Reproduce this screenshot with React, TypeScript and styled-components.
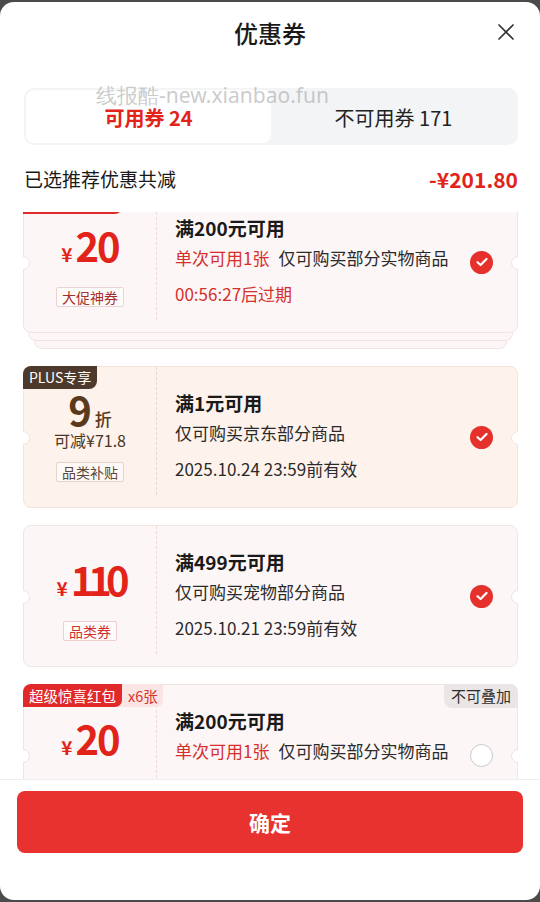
import styled, { createGlobalStyle, css } from 'styled-components';

const GlobalStyle = createGlobalStyle`
  body {
    margin: 0;
    background: #4b4b4b;
    font-family: "Noto Sans CJK SC", "Noto Sans", sans-serif;
    color: #1f1f1f;
  }
`;

const Sheet = styled.div`
  margin-top: 2px;
  height: 898px;
  background: #fff;
  border-radius: 14px;
  display: flex;
  flex-direction: column;
  overflow: hidden;
`;

const Header = styled.div`
  height: 60px;
  display: grid;
  grid-template-columns: 1fr auto 1fr;
  align-items: center;
`;

const Title = styled.div`
  grid-column: 2;
  font-size: 24px;
  font-weight: 500;
  color: #1a1a1a;
`;

const Close = styled.div`
  justify-self: end;
  margin-right: 26px;
  display: flex;
`;

const Tabs = styled.div`
  position: relative;
  margin: 26px 22px 0 24px;
  height: 57px;
  box-sizing: border-box;
  padding: 2px;
  background: #f3f4f6;
  border-radius: 10px;
  display: grid;
  grid-template-columns: 1fr 1fr;
`;

const Tab = styled.div<{ $active?: boolean }>`
  display: flex;
  align-items: center;
  justify-content: center;
  font-size: 20px;
  border-radius: 8px;
  padding-top: 2px;
  ${(p) =>
    p.$active
      ? css`
          background: #fff;
          color: #e2231a;
          font-weight: 700;
        `
      : css`
          color: #222;
        `}
`;

const Watermark = styled.div`
  position: absolute;
  left: 72px;
  top: -7px;
  font-size: 21px;
  color: rgba(160, 160, 160, 0.55);
  font-family: "Noto Sans", sans-serif;
  pointer-events: none;
`;

const Summary = styled.div`
  height: 67px;
  padding: 0 22px 0 24px;
  display: flex;
  align-items: center;
  justify-content: space-between;
  font-size: 19px;
  color: #1a1a1a;
`;

const Total = styled.span`
  color: #e2231a;
  font-weight: 700;
  font-size: 21px;
`;

const List = styled.div`
  flex: 1;
  overflow: hidden;
`;

const ListInner = styled.div`
  margin-top: -21px;
  padding: 0 22px 0 23px;
  display: flex;
  flex-direction: column;
`;

const Group = styled.div`
  margin-bottom: 17px;
`;

const tones = {
  red: { bg: '#fcf6f6', border: '#f4e3e3', line: '#ecd9d9' },
  gold: { bg: '#fdf2ec', border: '#f6e4da', line: '#ead7cc' },
};

type Tone = keyof typeof tones;

const Card = styled.div<{ $tone: Tone }>`
  position: relative;
  height: 142px;
  box-sizing: border-box;
  display: grid;
  grid-template-columns: 133px 1fr auto;
  background: ${(p) => tones[p.$tone].bg};
  border: 1px solid ${(p) => tones[p.$tone].border};
  border-radius: 8px;

  &::before,
  &::after {
    content: '';
    position: absolute;
    top: 64px;
    width: 12px;
    height: 12px;
    border-radius: 50%;
    background: #fff;
    border: 1px solid transparent;
    transform: rotate(45deg);
  }
  &::before {
    left: -8px;
    border-top-color: ${(p) => tones[p.$tone].border};
    border-right-color: ${(p) => tones[p.$tone].border};
  }
  &::after {
    right: -8px;
    border-bottom-color: ${(p) => tones[p.$tone].border};
    border-left-color: ${(p) => tones[p.$tone].border};
  }
`;

const StackLayer = styled.div<{ $inset: number }>`
  height: 8px;
  margin: 0 ${(p) => p.$inset}px;
  box-sizing: border-box;
  background: #fcf6f6;
  border: 1px solid #f4e3e3;
  border-top: none;
  border-radius: 0 0 8px 8px;
`;

const Left = styled.div<{ $top: number; $tone: Tone }>`
  display: flex;
  flex-direction: column;
  align-items: center;
  padding-top: ${(p) => p.$top}px;
  border-right: 1px dashed ${(p) => tones[p.$tone].line};
  margin-bottom: 12px;
`;

const Amount = styled.div`
  display: flex;
  align-items: baseline;
  color: #e2231a;
  font-weight: 700;
  height: 50px;
  line-height: 50px;
`;

const Yen = styled.span`
  font-size: 19px;
  margin-right: 3px;
`;

const Big = styled.span<{ $tight?: boolean }>`
  font-size: 40px;
  letter-spacing: ${(p) => (p.$tight ? '-6px' : '-2px')};
`;

const Discount = styled.div`
  display: flex;
  align-items: baseline;
  color: #5a3a1c;
  font-weight: 700;
  height: 40px;
  line-height: 40px;
`;

const DiscountNum = styled.span`
  font-size: 40px;
`;

const DiscountUnit = styled.span`
  font-size: 17px;
  font-weight: 500;
  margin-left: 3px;
`;

const Saving = styled.div`
  font-size: 16px;
  color: #4a3424;
  line-height: 22px;
`;

const tagTones = {
  promo: { color: '#a8302c', border: '#ead3d3' },
  gold: { color: '#5a4636', border: '#e4d5ca' },
  red: { color: '#d1322d', border: '#f0cfcd' },
};

const Tag = styled.div<{ $tone: keyof typeof tagTones; $gap: number }>`
  margin-top: ${(p) => p.$gap}px;
  height: 20px;
  line-height: 18px;
  box-sizing: border-box;
  padding: 0 5px;
  font-size: 14px;
  border-radius: 2px;
  color: ${(p) => tagTones[p.$tone].color};
  border: 1px solid ${(p) => tagTones[p.$tone].border};
  background: rgba(255, 255, 255, 0.5);
`;

const Info = styled.div`
  display: flex;
  flex-direction: column;
  justify-content: center;
  padding-left: 18px;
  padding-bottom: 2px;
`;

const Cond = styled.div`
  font-size: 19px;
  font-weight: 700;
  line-height: 30px;
  color: #1a1a1a;
`;

const Desc = styled.div`
  font-size: 17px;
  line-height: 30px;
  color: #2a2a2a;
  white-space: nowrap;
`;

const Limit = styled.span`
  color: #d5302b;
  margin-right: 9px;
`;

const Expire = styled.div<{ $red?: boolean }>`
  font-size: 17px;
  line-height: 30px;
  margin-top: 6px;
  color: ${(p) => (p.$red ? '#d5302b' : '#2a2a2a')};
`;

const Select = styled.div`
  display: flex;
  align-items: center;
  padding: 0 24px 0 10px;
`;

const Check = styled.div<{ $on?: boolean }>`
  width: 23px;
  height: 23px;
  box-sizing: border-box;
  border-radius: 50%;
  display: flex;
  align-items: center;
  justify-content: center;
  ${(p) =>
    p.$on
      ? css`
          background: #e5302c;
        `
      : css`
          border: 1.5px solid #c9c9c9;
          background: #fff;
        `}
`;

const CornerTag = styled.div`
  position: absolute;
  left: -1px;
  top: -1px;
  display: flex;
  height: 23px;
  font-size: 14.5px;
  line-height: 23px;
`;

const PlusTag = styled.div`
  background: #4e3a2c;
  color: #fff;
  padding: 0 6px;
  border-radius: 8px 0 8px 0;
  font-size: 14px;
`;

const RedTag = styled.div`
  position: relative;
  z-index: 1;
  background: #e1292a;
  color: #fff;
  padding: 0 6px;
  border-radius: 8px 0 7px 0;
`;

const CountTag = styled.div`
  background: #fbe4e4;
  color: #d8332e;
  padding: 0 5px 0 12px;
  border-radius: 0 0 7px 0;
  margin-left: -6px;
`;

const NoStack = styled.div`
  position: absolute;
  right: -1px;
  top: -1px;
  height: 24px;
  line-height: 24px;
  padding: 0 7px;
  font-size: 15px;
  color: #2e2e2e;
  background: #ebe6e6;
  border-radius: 0 8px 0 8px;
`;

const Footer = styled.div`
  border-top: 1px solid #eeeeee;
  padding: 11px 17px 0 17px;
  height: 121px;
  box-sizing: border-box;
`;

const Confirm = styled.div`
  height: 62px;
  border-radius: 8px;
  background: #e8322f;
  color: #fff;
  font-size: 21px;
  font-weight: 700;
  display: flex;
  align-items: center;
  justify-content: center;
`;

function CheckMark() {
  return (
    <svg width="12" height="10" viewBox="0 0 12 10">
      <path d="M1.5 5.2 4.6 8 10.5 2" fill="none" stroke="#fff" strokeWidth="2.2" strokeLinecap="round" strokeLinejoin="round" />
    </svg>
  );
}

function Money({ value, tight }: { value: string; tight?: boolean }) {
  return (
    <Amount>
      <Yen>¥</Yen>
      <Big $tight={tight}>{value}</Big>
    </Amount>
  );
}

export default function App() {
  return (
    <>
      <GlobalStyle />
      <Sheet>
        <Header>
          <Title>优惠券</Title>
          <Close>
            <svg width="16" height="16" viewBox="0 0 16 16">
              <path d="M1 1 15 15M15 1 1 15" stroke="#333" strokeWidth="1.7" strokeLinecap="round" />
            </svg>
          </Close>
        </Header>

        <Tabs>
          <Tab $active>可用券 24</Tab>
          <Tab>不可用券 171</Tab>
          <Watermark>线报酷-new.xianbao.fun</Watermark>
        </Tabs>

        <Summary>
          <span>已选推荐优惠共减</span>
          <Total>-¥201.80</Total>
        </Summary>

        <List>
          <ListInner>
            <Group>
              <Card $tone="red">
                <CornerTag>
                  <RedTag>超级惊喜红包</RedTag>
                </CornerTag>
                <Left $top={28} $tone="red">
                  <Money value="20" />
                  <Tag $tone="promo" $gap={17}>大促神券</Tag>
                </Left>
                <Info>
                  <Cond>满200元可用</Cond>
                  <Desc>
                    <Limit>单次可用1张</Limit>仅可购买部分实物商品
                  </Desc>
                  <Expire $red>00:56:27后过期</Expire>
                </Info>
                <Select>
                  <Check $on>
                    <CheckMark />
                  </Check>
                </Select>
              </Card>
              <StackLayer $inset={5} />
              <StackLayer $inset={11} />
            </Group>

            <Group>
              <Card $tone="gold">
                <CornerTag>
                  <PlusTag>PLUS专享</PlusTag>
                </CornerTag>
                <Left $top={22} $tone="gold">
                  <Discount>
                    <DiscountNum>9</DiscountNum>
                    <DiscountUnit>折</DiscountUnit>
                  </Discount>
                  <Saving>可减¥71.8</Saving>
                  <Tag $tone="gold" $gap={11}>品类补贴</Tag>
                </Left>
                <Info>
                  <Cond>满1元可用</Cond>
                  <Desc>仅可购买京东部分商品</Desc>
                  <Expire>2025.10.24 23:59前有效</Expire>
                </Info>
                <Select>
                  <Check $on>
                    <CheckMark />
                  </Check>
                </Select>
              </Card>
            </Group>

            <Group>
              <Card $tone="red">
                <Left $top={28} $tone="red">
                  <Money value="110" tight />
                  <Tag $tone="red" $gap={17}>品类券</Tag>
                </Left>
                <Info>
                  <Cond>满499元可用</Cond>
                  <Desc>仅可购买宠物部分商品</Desc>
                  <Expire>2025.10.21 23:59前有效</Expire>
                </Info>
                <Select>
                  <Check $on>
                    <CheckMark />
                  </Check>
                </Select>
              </Card>
            </Group>

            <Group>
              <Card $tone="red">
                <CornerTag>
                  <RedTag>超级惊喜红包</RedTag>
                  <CountTag>x6张</CountTag>
                </CornerTag>
                <NoStack>不可叠加</NoStack>
                <Left $top={28} $tone="red">
                  <Money value="20" />
                  <Tag $tone="promo" $gap={17}>大促神券</Tag>
                </Left>
                <Info>
                  <Cond>满200元可用</Cond>
                  <Desc>
                    <Limit>单次可用1张</Limit>仅可购买部分实物商品
                  </Desc>
                  <Expire $red>00:56:27后过期</Expire>
                </Info>
                <Select>
                  <Check />
                </Select>
              </Card>
            </Group>
          </ListInner>
        </List>

        <Footer>
          <Confirm>确定</Confirm>
        </Footer>
      </Sheet>
    </>
  );
}
